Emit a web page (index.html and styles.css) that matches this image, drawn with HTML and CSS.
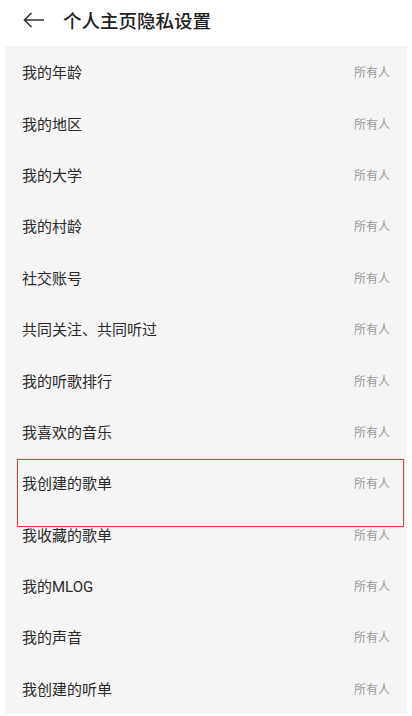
FILE: index.html
```html
<!DOCTYPE html>
<html lang="zh-CN">
<head>
    <meta charset="UTF-8">
    <meta name="viewport" content="width=device-width, initial-scale=1.0">
    <title>个人主页隐私设置</title>
    <link rel="stylesheet" href="styles.css">
</head>
<body>
    <header class="topbar">
        <svg class="back" width="22" height="16" viewBox="0 0 22 16">
            <path d="M21 8H1.5M8.5 1L1.5 8l7 7" fill="none" stroke="#333" stroke-width="1.6"/>
        </svg>
        <h1 class="title">个人主页隐私设置</h1>
    </header>
    <div class="list">
        <div class="row"><span class="name">我的年龄</span><span class="value">所有人</span></div>
        <div class="row"><span class="name">我的地区</span><span class="value">所有人</span></div>
        <div class="row"><span class="name">我的大学</span><span class="value">所有人</span></div>
        <div class="row"><span class="name">我的村龄</span><span class="value">所有人</span></div>
        <div class="row"><span class="name">社交账号</span><span class="value">所有人</span></div>
        <div class="row"><span class="name">共同关注、共同听过</span><span class="value">所有人</span></div>
        <div class="row"><span class="name">我的听歌排行</span><span class="value">所有人</span></div>
        <div class="row"><span class="name">我喜欢的音乐</span><span class="value">所有人</span></div>
        <div class="row marked"><span class="name">我创建的歌单</span><span class="value">所有人</span></div>
        <div class="row"><span class="name">我收藏的歌单</span><span class="value">所有人</span></div>
        <div class="row"><span class="name">我的MLOG</span><span class="value">所有人</span></div>
        <div class="row"><span class="name">我的声音</span><span class="value">所有人</span></div>
        <div class="row"><span class="name">我创建的听单</span><span class="value">所有人</span></div>
    </div>
</body>
</html>
```
FILE: styles.css
```css
body {
    margin: 0;
    background: #fff;
    color: #222;
    font-family: Roboto, "Noto Sans CJK SC", sans-serif;
    overflow: hidden;
}
.topbar {
    height: 46px;
    display: flex;
    align-items: center;
    padding: 0 0 6px 23px;
    box-sizing: border-box;
}
.back {
    margin-right: 18px;
}
.title {
    margin: 0;
    font-size: 18.5px;
    font-weight: 500;
    color: #222;
}
.list {
    background: #f5f5f5;
    margin: 0 5px;
}
.row {
    height: 51.4px;
    display: flex;
    align-items: center;
    justify-content: space-between;
    padding: 0 17px;
    font-size: 15px;
}
.row .name {
    color: #2a2a2a;
}
.row .value {
    font-size: 12px;
    color: #999;
}
/* highlighted row, drawn over the list */
.row.marked {
    position: relative;
}
.row.marked::after {
    content: "";
    position: absolute;
    z-index: 2;
    left: 12px;
    right: 3px;
    top: 2px;
    height: 68px;
    border: 1px solid #e0403f;
    box-shadow: 0 0 1px rgba(224, 64, 63, 0.5);
    box-sizing: border-box;
}
```
